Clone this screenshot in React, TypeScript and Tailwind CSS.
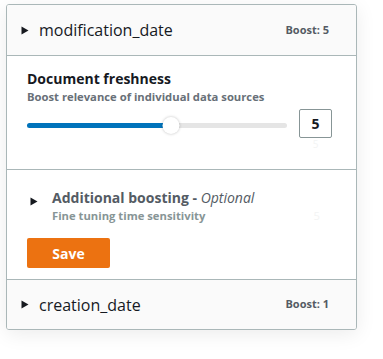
import { useState } from 'react';

function Caret({ className = '' }: { className?: string }) {
  return (
    <svg width="8" height="9" viewBox="0 0 8 9" className={className}>
      <path d="M0.5 0.5 L7.5 4.5 L0.5 8.5 Z" fill="#16191f" />
    </svg>
  );
}

function FieldHeader({ name, boost }: { name: string; boost: number }) {
  return (
    <div className="flex h-full items-center justify-between bg-[#fafafa] pl-[14px] pr-[27px]">
      <div className="flex items-center gap-[10px]">
        <Caret />
        <span className="text-[16px] leading-5 text-[#16191f]">{name}</span>
      </div>
      <span className="text-[11px] font-bold text-[#545b64]">Boost: {boost}</span>
    </div>
  );
}

export default function App() {
  const [value] = useState(5);
  const pct = (value / 9) * 100;

  return (
    <div
      className="h-[359px] w-[383px] bg-white pl-[6px] pt-[4px]"
      style={{ fontFamily: '"Open Sans", "Noto Sans", sans-serif' }}
    >
      <div className="w-[351px] overflow-hidden rounded-[3px] border border-[#aab7b8] bg-white shadow-[0_4px_20px_rgba(0,0,0,0.08)]">
        <div className="h-[51px] border-b border-[#aab7b8]">
          <FieldHeader name="modification_date" boost={5} />
        </div>

        <div className="h-[114px] border-b border-[#aab7b8] pl-[20px] pr-[23px] pt-[13px]">
          <div className="text-[14px] font-bold leading-5 text-[#16191f]">Document freshness</div>
          <div className="text-[11.25px] font-bold leading-4 text-[#687078]">
            Boost relevance of individual data sources
          </div>
          <div className="mt-[4px] flex items-start gap-[12px]">
            <div className="relative mt-[8px] h-[17px] w-[260px]">
              <div className="absolute left-0 right-0 top-[6px] h-[5px] rounded-full bg-[#e5e5e5]" />
              <div
                className="absolute left-0 top-[6px] h-[5px] rounded-full bg-[#0073bb]"
                style={{ width: `${pct}%` }}
              />
              <div
                className="absolute top-0 h-[17px] w-[17px] -translate-x-1/2 rounded-full bg-white shadow-[0_0_3px_rgba(0,0,0,0.25)]"
                style={{ left: `${pct}%` }}
              />
            </div>
            <div className="flex flex-col items-center">
              <div className="flex h-[29px] w-[33px] items-center justify-center rounded-[2px] border border-[#879596] text-[14px] font-bold text-[#16191f]">
                {value}
              </div>
              <span className="text-[10px] leading-3 text-[#f3f4f4]">5</span>
            </div>
          </div>
        </div>

        <div className="h-[110px] border-b border-[#aab7b8] pl-[20px] pr-[23px] pt-[18px]">
          <div className="flex items-start">
            <Caret className="ml-[3px] mt-[9px]" />
            <div className="ml-[14px] flex-1">
              <div className="text-[14px] font-bold leading-5 text-[#545b64]">
                Additional boosting - <span className="font-normal italic">Optional</span>
              </div>
              <div className="flex justify-between text-[11.25px] font-bold leading-4 text-[#879596]">
                <span>Fine tuning time sensitivity</span>
                <span className="mr-[13px] font-normal text-[#f3f4f4]">5</span>
              </div>
            </div>
          </div>
          <button className="mt-[14px] flex h-[30px] w-[83px] items-center justify-center rounded-[2px] bg-[#ec7211] text-[14px] font-bold text-white">
            Save
          </button>
        </div>

        <div className="h-[49px]">
          <FieldHeader name="creation_date" boost={1} />
        </div>
      </div>
    </div>
  );
}
